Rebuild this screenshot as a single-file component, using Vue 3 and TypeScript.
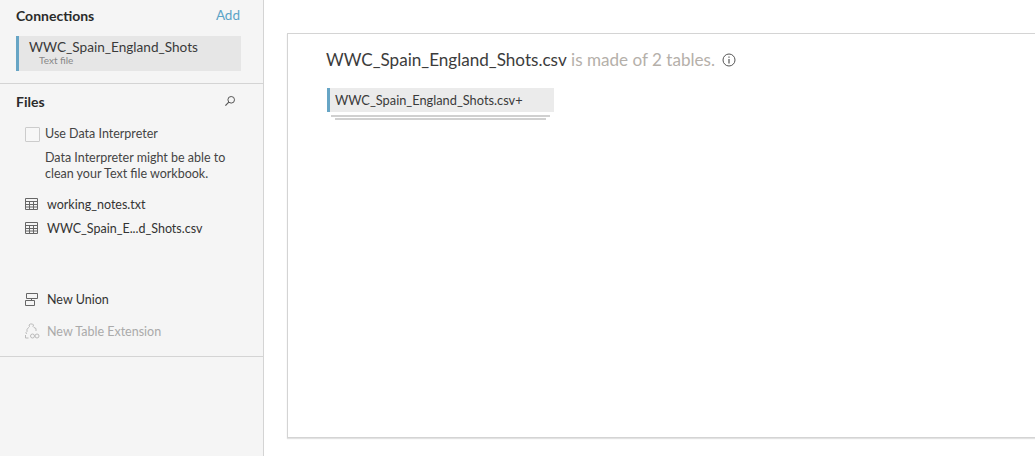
<script setup lang="ts">
interface FileRow {
  name: string;
}

const files: FileRow[] = [
  { name: 'working_notes.txt' },
  { name: 'WWC_Spain_E...d_Shots.csv' },
];

// grid lines for the little table icon
const gridPath = 'M0.5 0.5h12v11h-12zM0.5 3.5h12M0.5 6.5h12M0.5 9h12M4.5 3.5v8M8.5 3.5v8';
</script>

<template>
  <div class="page">
    <aside class="sidebar">
      <section class="connections">
        <div class="head">
          <span class="title">Connections</span>
          <span class="add">Add</span>
        </div>
        <div class="connection">
          <div class="conn-name">WWC_Spain_England_Shots</div>
          <div class="conn-type">Text file</div>
        </div>
      </section>

      <section class="files">
        <div class="head files-head">
          <span class="title">Files</span>
          <svg class="search" width="12" height="12" viewBox="0 0 12 12" fill="none">
            <circle cx="7.2" cy="4.8" r="3.3" stroke="#555" stroke-width="1" />
            <path d="M4.8 7.2L1.4 10.6" stroke="#555" stroke-width="1.2" />
          </svg>
        </div>

        <label class="interpreter">
          <span class="checkbox"></span>
          <span>Use Data Interpreter</span>
        </label>
        <p class="hint">Data Interpreter might be able to clean your Text file workbook.</p>

        <ul class="file-list">
          <li v-for="file in files" :key="file.name" class="row">
            <svg class="icon" width="13" height="12" viewBox="0 0 13 12" fill="none">
              <path :d="gridPath" stroke="#666" stroke-width="1" />
            </svg>
            <span>{{ file.name }}</span>
          </li>
        </ul>

        <div class="row union">
          <svg class="icon" width="13" height="13" viewBox="0 0 13 13" fill="none">
            <path d="M1.5 0.5h11v5h-11zM0.5 7.5h9v5h-9zM6.5 5.5v2" stroke="#666" stroke-width="1" />
          </svg>
          <span>New Union</span>
        </div>
        <div class="row extension">
          <svg class="icon" width="15" height="16" viewBox="0 0 15 16" fill="none">
            <path d="M3.5 4.5l1-1-.5-1.5 1.5-1h2l1 1-.5 1.5 1 1 2 1v2.5M3.5 4.5l-1.5 2v2M2 8.5l-1 1 .5 1.5" stroke="#bbb" stroke-width="1" />
            <path d="M0.5 12v3h3" stroke="#bbb" stroke-width="1" />
            <circle cx="7.5" cy="13" r="2" stroke="#bbb" stroke-width="1" />
            <circle cx="12" cy="13" r="2" stroke="#bbb" stroke-width="1" />
          </svg>
          <span>New Table Extension</span>
        </div>
      </section>
    </aside>

    <main class="main">
      <div class="panel">
        <h1 class="heading">
          <span class="file">WWC_Spain_England_Shots.csv</span>
          <span class="muted"> is made of 2 tables.</span>
          <svg class="info" width="14" height="14" viewBox="0 0 14 14" fill="none">
            <circle cx="7" cy="7" r="6" stroke="#555" stroke-width="1" />
            <path d="M7 6v4.5M7 3.5v1.3" stroke="#555" stroke-width="1.2" />
          </svg>
        </h1>
        <div class="stack">
          <div class="table-pill">WWC_Spain_England_Shots.csv+</div>
          <div class="under under-one"></div>
          <div class="under under-two"></div>
        </div>
      </div>
    </main>
  </div>
</template>

<style>
html,
body {
  margin: 0;
  overflow: hidden;
}
</style>

<style scoped>
.page {
  display: flex;
  width: 1035px;
  height: 456px;
  overflow: hidden;
  background: #fff;
  color: #333;
  font-family: Lato, "Open Sans", "Liberation Sans", sans-serif;
  font-size: 12.5px;
}

.sidebar {
  flex: none;
  box-sizing: border-box;
  width: 264px;
  background: #f5f5f5;
  border-right: 1px solid #d4d4d4;
}

.connections {
  box-sizing: border-box;
  height: 84px;
  padding: 6px 22px 0 16px;
  border-bottom: 1px solid #d4d4d4;
}

.head {
  display: flex;
  justify-content: space-between;
  align-items: center;
  height: 18px;
}

.title {
  font-size: 14px;
  font-weight: 700;
  color: #2b2b2b;
}

.add {
  margin-right: 1px;
  font-size: 13.5px;
  color: #5ba3c7;
}

.connection {
  box-sizing: border-box;
  height: 35px;
  margin-top: 12px;
  padding: 3px 0 0 10px;
  background: #e6e6e6;
  border-left: 3px solid #67a5c5;
}

.conn-name {
  font-size: 13.6px;
  line-height: 16px;
  color: #3a3a3a;
}

.conn-type {
  margin: 0 0 0 10px;
  font-size: 10px;
  line-height: 11px;
  color: #888;
}

.files {
  box-sizing: border-box;
  height: 273px;
  padding: 8px 0 0 16px;
  border-bottom: 1px solid #d4d4d4;
}

.files-head {
  padding-right: 27px;
}

.search {
  display: block;
}

.interpreter {
  display: flex;
  align-items: center;
  gap: 5px;
  margin: 16px 0 0 9px;
  line-height: 16px;
  color: #444;
}

.checkbox {
  box-sizing: border-box;
  width: 15px;
  height: 15px;
  background: #f7f7f7;
  border: 1px solid #ccc;
  border-radius: 1px;
}

.hint {
  width: 190px;
  margin: 8px 0 0 29px;
  line-height: 16px;
  color: #444;
}

.file-list {
  margin: 10px 0 0;
  padding: 0;
  list-style: none;
}

.row {
  display: flex;
  align-items: center;
  gap: 9px;
  height: 24px;
  margin-left: 9px;
  color: #333;
}

.icon {
  flex: none;
}

.union {
  margin-top: 47px;
}

.extension {
  margin-top: 8px;
  gap: 7px;
  color: #aaa;
}

.main {
  flex: 1;
  padding: 33px 0 0 23px;
  min-width: 0;
}

.panel {
  box-sizing: border-box;
  width: 760px;
  height: 405px;
  padding: 14px 0 0 38px;
  background: #fff;
  border: 1px solid #d4d4d4;
  border-right: 0;
  box-shadow: 0 1px 1px #e2e2e2;
}

.heading {
  display: flex;
  align-items: center;
  margin: 0;
  height: 23px;
  font-size: 17.1px;
  font-weight: 400;
  white-space: pre;
}

.file {
  color: #3c3c3c;
}

.muted {
  color: #b5b0aa;
}

.info {
  margin-left: 7px;
}

.stack {
  width: 227px;
  margin: 17px 0 0 1px;
}

.table-pill {
  box-sizing: border-box;
  height: 24px;
  padding-left: 5px;
  font-size: 12.8px;
  line-height: 24px;
  background: #ebebeb;
  border-left: 3px solid #67a5c5;
  color: #3a3a3a;
}

.under {
  height: 2px;
  background: #d0d0d0;
  margin-top: 1px;
}

.under-one {
  margin-left: 4px;
  margin-right: 4px;
  margin-top: 3px;
}

.under-two {
  margin-left: 8px;
  margin-right: 8px;
}
</style>
